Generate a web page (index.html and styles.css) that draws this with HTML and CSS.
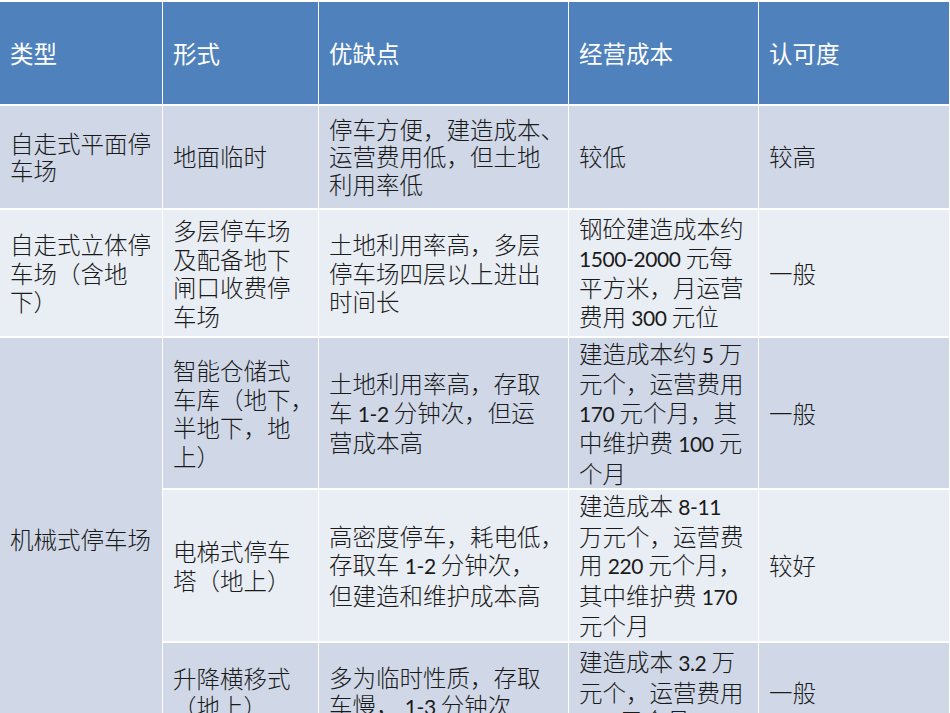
FILE: index.html
```html
<!DOCTYPE html>
<html lang="zh-CN">
<head>
<meta charset="utf-8">
<title>停车场类型比较</title>
<link rel="stylesheet" href="styles.css">
</head>
<body>
<table class="grid">
  <thead>
    <tr class="row-head">
      <th class="c1">类型</th>
      <th class="c2">形式</th>
      <th class="c3">优缺点</th>
      <th class="c4">经营成本</th>
      <th class="c5">认可度</th>
    </tr>
  </thead>
  <tbody>
    <tr class="row-a r1">
      <td>自走式平面停<br>车场</td>
      <td>地面临时</td>
      <td>停车方便，建造成本、<br>运营费用低，但土地<br>利用率低</td>
      <td>较低</td>
      <td>较高</td>
    </tr>
    <tr class="row-b r2">
      <td>自走式立体停<br>车场（含地<br>下）</td>
      <td>多层停车场<br>及配备地下<br>闸口收费停<br>车场</td>
      <td>土地利用率高，多层<br>停车场四层以上进出<br>时间长</td>
      <td>钢砼建造成本约<br><span class="num">1500-2000</span> 元每<br>平方米，月运营<br>费用 <span class="num">300</span> 元位</td>
      <td>一般</td>
    </tr>
    <tr class="row-a r3">
      <td rowspan="3" class="span-cell">机械式停车场</td>
      <td>智能仓储式<br>车库（地下，<br>半地下，地<br>上）</td>
      <td>土地利用率高，存取<br>车 <span class="num">1-2</span> 分钟次，但运<br>营成本高</td>
      <td>建造成本约 <span class="num">5</span> 万<br>元个，运营费用<br><span class="num">170</span> 元个月，其<br>中维护费 <span class="num">100</span> 元<br>个月</td>
      <td>一般</td>
    </tr>
    <tr class="row-b r4">
      <td>电梯式停车<br>塔（地上）</td>
      <td>高密度停车，耗电低，<br>存取车 <span class="num">1-2</span> 分钟次，<br>但建造和维护成本高</td>
      <td>建造成本 <span class="num">8-11</span><br>万元个，运营费<br>用 <span class="num">220</span> 元个月，<br>其中维护费 <span class="num">170</span><br>元个月</td>
      <td>较好</td>
    </tr>
    <tr class="row-a r5">
      <td>升降横移式<br>（地上）</td>
      <td>多为临时性质，存取<br>车慢， <span class="num">1-3</span> 分钟次</td>
      <td>建造成本 <span class="num">3.2</span> 万<br>元个，运营费用<br><span class="num">100</span> 元个月</td>
      <td>一般</td>
    </tr>
  </tbody>
</table>
</body>
</html>
```
FILE: styles.css
```css
html, body {
  margin: 0;
  padding: 0;
  background: #ffffff;
}
body {
  padding-top: 2px;
  width: 950px;
  height: 713px;
  overflow: hidden;
  font-family: "Noto Sans CJK SC", sans-serif;
}
.grid {
  border-collapse: separate;
  border-spacing: 0;
  table-layout: fixed;
  width: 950px;
}
.grid th,
.grid td {
  box-sizing: border-box;
  border-right: 1px solid #ffffff;
  border-bottom: 2px solid #ffffff;
  padding: 0 2px 0 10px;
  vertical-align: middle;
  text-align: left;
  white-space: nowrap;
  font-size: 23.5px;
  line-height: 28.5px;
  font-weight: 300;
  color: #1a1a1a;
}
.grid th {
  background: #4f81bd;
  color: #ffffff;
  font-size: 23.5px;
  font-weight: normal;
}
.c1 { width: 163px; }
.c2 { width: 156px; }
.c3 { width: 250px; }
.c4 { width: 190px; }
.c5 { width: 191px; }

.row-head { height: 104px; }
.r1 { height: 104px; }
.r2 { height: 128px; }
.r3 { height: 152px; }
.r4 { height: 153px; }
.r5 { height: 100px; }

.row-a td { background: #d0d8e8; }
.row-b td { background: #e9edf4; }
.span-cell { background: #d0d8e8; }

.r1 td { line-height: 27.5px; }

.num {
  font-family: Lato, "Noto Sans CJK SC", sans-serif;
  font-size: 21px;
  font-weight: normal;
  letter-spacing: -0.4px;
}
```
